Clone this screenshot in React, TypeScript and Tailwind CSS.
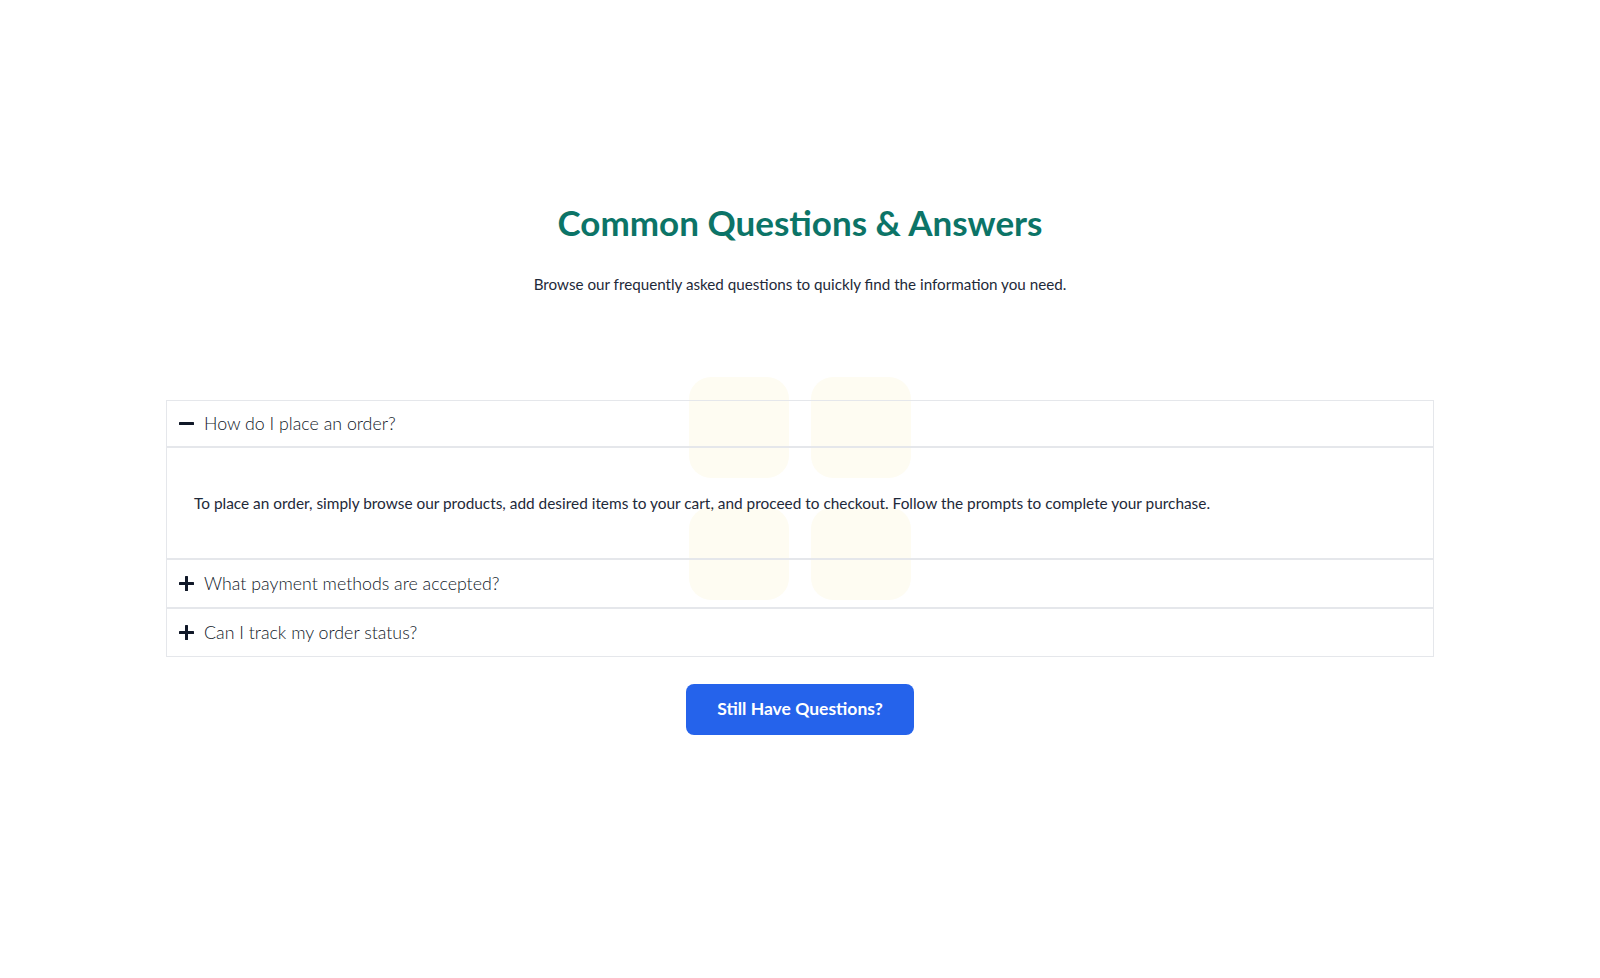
import { useState } from "react";

const faqs = [
  {
    q: "How do I place an order?",
    a: "To place an order, simply browse our products, add desired items to your cart, and proceed to checkout. Follow the prompts to complete your purchase.",
  },
  {
    q: "What payment methods are accepted?",
    a: "We accept all major credit cards, PayPal, and other secure payment options shown at checkout.",
  },
  {
    q: "Can I track my order status?",
    a: "Yes. Once your order ships you will receive an email with a tracking link to follow its progress.",
  },
];

function PlusMinus({ open }: { open: boolean }) {
  return (
    <svg width="15" height="15" viewBox="0 0 15 15" className="shrink-0 text-gray-900">
      <rect x="0" y="6" width="15" height="3" rx="0.5" fill="currentColor" />
      {!open && <rect x="6" y="0" width="3" height="15" rx="0.5" fill="currentColor" />}
    </svg>
  );
}

export default function App() {
  const [openIndex, setOpenIndex] = useState<number | null>(0);

  return (
    <div
      className="min-h-screen bg-white"
      style={{ fontFamily: "Lato, 'Noto Sans', sans-serif" }}
    >
      <section className="relative pt-[200px] pb-20">
        <h1 className="text-center text-[35px] leading-[44px] font-bold text-[#0c7467]">
          Common Questions &amp; Answers
        </h1>
        <p className="mt-[30px] text-center text-[15.2px] leading-[20px] text-gray-800">
          Browse our frequently asked questions to quickly find the information you need.
        </p>

        <div className="relative mx-auto mt-[106px] w-[1268px]">
          {/* decorative tiles behind the accordion */}
          <div className="pointer-events-none absolute top-[-23px] left-[523px] grid grid-cols-[100px_100px] grid-rows-[101px_93px] gap-x-[22px] gap-y-[29px]">
            <div className="rounded-[22px] bg-[#fefcf2]" />
            <div className="rounded-[22px] bg-[#fefcf2]" />
            <div className="rounded-[22px] bg-[#fefcf2]" />
            <div className="rounded-[22px] bg-[#fefcf2]" />
          </div>

          <div className="relative border border-gray-200">
            {faqs.map((item, i) => {
              const open = openIndex === i;
              const last = i === faqs.length - 1;
              return (
                <div key={item.q} className={last ? "" : "border-b-2 border-gray-200"}>
                  <button
                    type="button"
                    onClick={() => setOpenIndex(open ? null : i)}
                    className={`flex h-[47px] w-full items-center gap-[10px] pl-[12px] text-left ${
                      open ? "border-b-2 border-gray-200" : ""
                    }`}
                  >
                    <PlusMinus open={open} />
                    <span className="text-[17.8px] font-light text-gray-900">{item.q}</span>
                  </button>
                  {open && (
                    <div className="px-[27px] py-[45px] text-[15.4px] leading-[20px] text-gray-800">
                      {item.a}
                    </div>
                  )}
                </div>
              );
            })}
          </div>
        </div>

        <div className="mt-[27px] flex justify-center">
          <button
            type="button"
            className="h-[51px] w-[228px] rounded-lg bg-[#2563eb] text-[17.5px] font-bold text-white"
          >
            Still Have Questions?
          </button>
        </div>
      </section>
    </div>
  );
}
